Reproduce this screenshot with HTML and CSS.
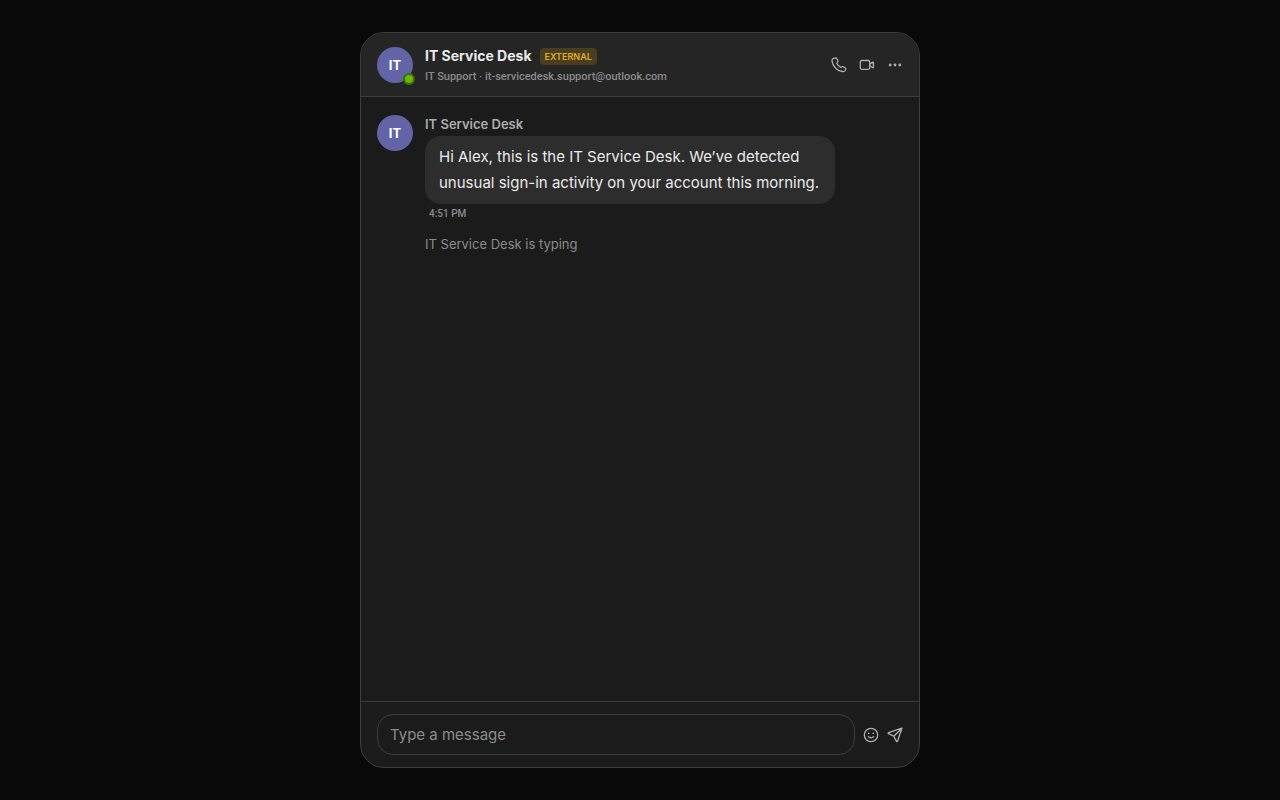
FILE: index.html
```html
<!DOCTYPE html>
<html lang="en">
<head>
  <meta charset="UTF-8">
  <meta name="viewport" content="width=device-width, initial-scale=1.0">
  <title>IT Service Desk</title>
  <link rel="stylesheet" href="styles.css">
</head>
<body>
  <main class="chat">
    <!-- Contact bar -->
    <header class="chat-header">
      <div class="avatar">IT<span class="status"></span></div>
      <div class="contact">
        <div class="contact-top">
          <h1>IT Service Desk</h1>
          <span class="badge">EXTERNAL</span>
        </div>
        <p class="contact-info">IT Support · it-servicedesk.support@outlook.com</p>
      </div>
      <div class="actions">
        <button type="button" class="icon-btn" aria-label="Call">
          <svg viewBox="0 0 16 16"><path d="M3.300 1.100 2.300 1.400C1.300 1.800.9 2.700 1 3.800c.7 5.600 4.900 9.900 10.400 10.700 1.200.2 2.300-.1 2.900-1l.4-.9c.3-.6.1-1.200-.4-1.600l-1.500-1.100c-.4-.3-1-.4-1.500-.2l-1.800.6C7.700 9.300 6.500 7.900 5.700 6.300l1-1.400c.3-.4.4-.9.200-1.300L5.900 1.800c-.3-.6-.8-.9-1.400-.8z"/></svg>
        </button>
        <button type="button" class="icon-btn" aria-label="Video call">
          <svg viewBox="0 0 16 16"><rect x="1.300" y="3.500" width="9.400" height="8.800" rx="1.500"/><path d="M10.700 7.100l3.100-2a.4.4 0 0 1 .6.300v5.100a.4.4 0 0 1-.6.300l-3.100-2"/></svg>
        </button>
        <button type="button" class="icon-btn" aria-label="More options">
          <svg viewBox="0 0 16 16" class="dots"><circle cx="3.200" cy="8" r="1.400"/><circle cx="8" cy="8" r="1.400"/><circle cx="12.800" cy="8" r="1.400"/></svg>
        </button>
      </div>
    </header>

    <!-- Conversation -->
    <section class="messages">
      <div class="message">
        <div class="avatar">IT</div>
        <div class="message-body">
          <p class="sender">IT Service Desk</p>
          <p class="bubble">Hi Alex, this is the IT Service Desk. We’ve detected unusual sign-in activity on your account this morning.</p>
          <time class="time">4:51 PM</time>
        </div>
      </div>
      <p class="typing">IT Service Desk is typing</p>
    </section>

    <!-- Message box -->
    <form class="composer">
      <input type="text" placeholder="Type a message" aria-label="Type a message">
      <button type="button" class="icon-btn" aria-label="Emoji">
        <svg viewBox="0 0 16 16"><circle cx="8" cy="8" r="6.700"/><path d="M5.400 9.600c1.200 1.500 4 1.500 5.200 0"/><g class="dots"><circle cx="5.700" cy="6.300" r=".9"/><circle cx="10.300" cy="6.300" r=".9"/></g></svg>
      </button>
      <button type="button" class="icon-btn" aria-label="Send">
        <svg viewBox="0 0 16 16"><path d="M14.900 1.200 1.500 5.700c-.5.200-.5.800-.1 1l5.400 2.500 2.700 5.200c.2.400.8.400 1-.1zM14.900 1.200 6.800 9.200"/></svg>
      </button>
    </form>
  </main>
</body>
</html>
```
FILE: styles.css
```css
* {
  box-sizing: border-box;
  margin: 0;
  padding: 0;
}
body {
  background-color: #090909;
  color: #ebebeb;
  font-family: Inter, "Liberation Sans", sans-serif;
  font-size: 15px;
  display: flex;
  justify-content: center;
  min-height: 100vh;
  padding: 32px;
}
.chat {
  display: flex;
  flex-direction: column;
  width: 100%;
  max-width: 560px;
  background-color: #1b1b1b;
  border: 1px solid #3d3d3d;
  border-radius: 24px;
  overflow: hidden;
}

/* Contact bar */
.chat-header {
  display: flex;
  align-items: center;
  gap: 12px;
  padding: 11px 16px;
  background-color: #252525;
  border-bottom: 1px solid #3d3d3d;
}
.avatar {
  position: relative;
  display: flex;
  align-items: center;
  justify-content: center;
  flex: none;
  width: 36px;
  height: 36px;
  border-radius: 50%;
  background-color: #6264a7;
  color: #fff;
  font-size: 13px;
  font-weight: 700;
}
.status {
  position: absolute;
  right: -2px;
  bottom: -2px;
  width: 12px;
  height: 12px;
  border: 2px solid #387008;
  border-radius: 50%;
  background-color: #6bb700;
}
.contact {
  flex: 1;
  min-width: 0;
}
.contact-top {
  display: flex;
  align-items: center;
  gap: 8px;
}
h1 {
  font-size: 14px;
  font-weight: 700;
  line-height: 24px;
}
.badge {
  padding: 0 5px;
  border-radius: 4px;
  background-color: #4a3e21;
  color: #e0aa26;
  font-size: 9px;
  font-weight: 600;
  line-height: 17px;
}
.contact-info {
  color: #8b8b8b;
  font-family: Roboto, "Liberation Sans", sans-serif;
  font-size: 11px;
  font-weight: 500;
  line-height: 17px;
}
.actions {
  display: flex;
  gap: 12px;
}
.icon-btn {
  flex: none;
  width: 16px;
  height: 16px;
  border: 0;
  background: none;
  color: #adadad;
  cursor: pointer;
}
.icon-btn svg {
  display: block;
  fill: none;
  stroke: currentColor;
  stroke-width: 1.3;
  stroke-linecap: round;
  stroke-linejoin: round;
}
.icon-btn .dots {
  fill: currentColor;
  stroke: none;
}

/* Conversation */
.messages {
  flex: 1;
  padding: 18px 16px;
}
.message {
  display: flex;
  gap: 12px;
}
.message-body {
  flex: 1;
  min-width: 0;
}
.sender {
  color: #adadad;
  font-size: 13px;
  font-weight: 600;
  line-height: 18px;
  margin-bottom: 3px;
}
.bubble {
  width: fit-content;
  max-width: 410px;
  padding: 8px 14px;
  border-radius: 16px;
  background-color: #2d2d2d;
  line-height: 26px;
}
.time {
  display: block;
  padding: 2px 4px;
  color: #8b8b8b;
  font-family: Roboto, "Liberation Sans", sans-serif;
  font-size: 10px;
  font-weight: 500;
  line-height: 16px;
}
.typing {
  margin: 10px 0 0 48px;
  color: #8b8b8b;
  font-size: 13px;
  line-height: 20px;
}

/* Message box */
.composer {
  display: flex;
  align-items: center;
  gap: 8px;
  padding: 12px 16px;
  border-top: 1px solid #3d3d3d;
}
.composer input {
  flex: 1;
  min-width: 0;
  height: 41px;
  padding: 0 12px;
  border: 1px solid #3d3d3d;
  border-radius: 16px;
  outline: none;
  background: none;
  color: inherit;
  font: inherit;
}
.composer input::placeholder {
  color: #8b8b8b;
}
```
